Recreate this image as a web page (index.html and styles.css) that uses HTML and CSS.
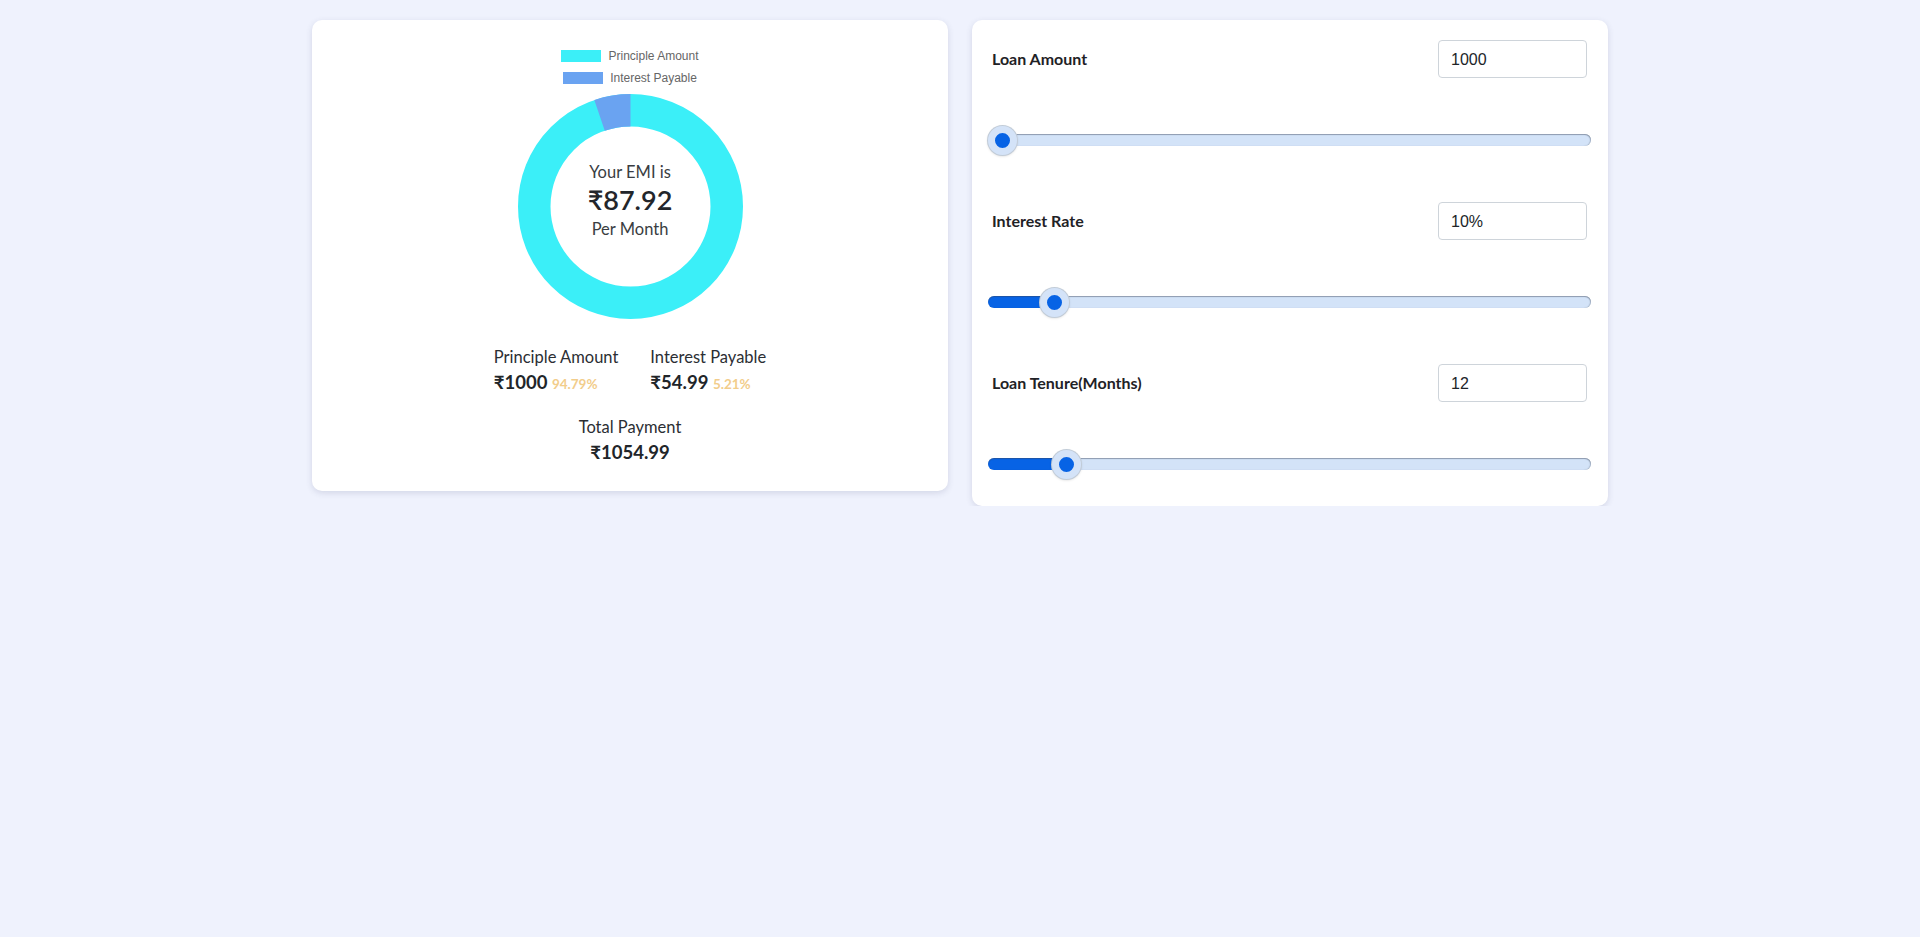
FILE: index.html
```html
<!DOCTYPE html>
<html lang="en">
<head>
<meta charset="utf-8">
<title>EMI Calculator</title>
<link rel="stylesheet" href="styles.css">
</head>
<body>
<main class="wrap">
  <section class="card summary">
    <div class="legend">
      <div class="legend-item"><span class="swatch swatch-principle"></span><span>Principle Amount</span></div>
      <div class="legend-item"><span class="swatch swatch-interest"></span><span>Interest Payable</span></div>
    </div>
    <div class="donut">
      <svg class="donut-svg" width="225" height="225" viewBox="0 0 225 225">
        <circle cx="112.5" cy="112.5" r="96.25" fill="none" stroke="#3beff8" stroke-width="32.5"/>
        <path d="M112.5,0 A112.5,112.5 0 0 0 76.33,5.97 L86.78,36.75 A80,80 0 0 1 112.5,32.5 Z" fill="#6aa3f1"/>
      </svg>
      <div class="donut-text">
        <div class="emi-label">Your EMI is</div>
        <div class="emi-value">₹87.92</div>
        <div class="emi-label emi-per">Per Month</div>
      </div>
    </div>
    <div class="stats">
      <div class="stat">
        <div class="stat-label">Principle Amount</div>
        <div class="stat-value">₹1000 <span class="pct">94.79%</span></div>
      </div>
      <div class="stat">
        <div class="stat-label">Interest Payable</div>
        <div class="stat-value">₹54.99 <span class="pct">5.21%</span></div>
      </div>
    </div>
    <div class="total">
      <div class="stat-label">Total Payment</div>
      <div class="stat-value">₹1054.99</div>
    </div>
  </section>

  <section class="card controls">
    <div class="group">
      <div class="row">
        <label class="field-label" for="amount">Loan Amount</label>
        <input class="field-input" id="amount" type="text" value="1000">
      </div>
      <input class="slider" type="range" min="1000" max="100000" value="1000" style="--fill: calc(15px + 0%)">
    </div>
    <div class="group">
      <div class="row">
        <label class="field-label" for="rate">Interest Rate</label>
        <input class="field-input" id="rate" type="text" value="10%">
      </div>
      <input class="slider" type="range" min="1" max="100" value="10" style="--fill: calc(15px + 9.09% - 2.73px)">
    </div>
    <div class="group">
      <div class="row">
        <label class="field-label" for="tenure">Loan Tenure(Months)</label>
        <input class="field-input" id="tenure" type="text" value="12">
      </div>
      <input class="slider" type="range" min="1" max="100" value="12" style="--fill: calc(15px + 11.11% - 3.33px)">
    </div>
  </section>
</main>
</body>
</html>
```

FILE: styles.css
```css
* {
  box-sizing: border-box;
}

body {
  margin: 0;
  background: #eff2fd;
  font-family: Lato, "Open Sans", "DejaVu Sans", sans-serif;
  color: #212529;
}

.wrap {
  width: 1296px;
  margin: 20px auto 0;
  display: grid;
  grid-template-columns: 1fr 1fr;
  gap: 24px;
  align-items: start;
}

.card {
  min-width: 0;
  background: #fff;
  border-radius: 10px;
  box-shadow: 0 2px 6px rgba(60, 70, 110, 0.16);
}

/* ---------- summary card ---------- */
.summary {
  padding: 20px 0 26px;
  display: flex;
  flex-direction: column;
  align-items: center;
}

.legend {
  padding: 10px 0;
  display: flex;
  flex-direction: column;
  align-items: center;
  gap: 10px;
  font-family: "Liberation Sans", Arial, sans-serif;
  font-size: 12px;
  color: #666;
}

.legend-item {
  height: 12px;
  display: flex;
  align-items: center;
  gap: 7px;
  line-height: 12px;
}

.swatch {
  width: 40px;
  height: 12px;
  display: block;
}

.swatch-principle {
  background: #3beff8;
}

.swatch-interest {
  background: #6aa3f1;
}

.donut {
  display: grid;
  width: 225px;
  height: 225px;
}

.donut-svg,
.donut-text {
  grid-area: 1 / 1;
}

.donut-svg {
  display: block;
}

.donut-text {
  justify-self: center;
  align-self: start;
  margin-top: 67px;
  text-align: center;
}

.emi-label {
  font-size: 16.5px;
  line-height: 22px;
  color: #3a3d42;
}

.emi-per {
  margin-top: 1px;
}

.emi-value {
  font-size: 27px;
  line-height: 34px;
  font-weight: 600;
  color: #23262b;
}

.stats {
  margin-top: 26px;
  display: flex;
  gap: 32px;
}

.stat-label {
  font-size: 16.5px;
  line-height: 24px;
  color: #2b2e33;
}

.stat-value {
  font-size: 18.5px;
  line-height: 26px;
  font-weight: 700;
  color: #212529;
}

.pct {
  font-size: 13.5px;
  font-weight: 700;
  color: #f2cd8b;
}

.total {
  margin-top: 18px;
  text-align: center;
}

/* ---------- controls card ---------- */
.controls {
  padding: 20px 17px 27px 16px;
}

.group + .group {
  margin-top: 47px;
}

.row {
  display: flex;
  justify-content: space-between;
  align-items: center;
  padding: 0 4px;
  height: 38px;
}

.field-label {
  font-size: 16px;
  font-weight: 700;
  color: #1f2226;
  margin-top: -2px;
}

.field-input {
  width: 149px;
  height: 38px;
  padding: 1px 12px 0;
  border: 1px solid #ced4da;
  border-radius: 4px;
  font-family: "Liberation Sans", Arial, sans-serif;
  font-size: 16px;
  color: #212529;
  background: #fff;
}

.slider {
  -webkit-appearance: none;
  appearance: none;
  display: block;
  width: 100%;
  height: 30px;
  margin: 47px 0 0;
  padding: 0;
  background: transparent;
}

.slider::-webkit-slider-runnable-track {
  height: 12px;
  border-radius: 6px;
  background: linear-gradient(to right, #0763e5 var(--fill), #d3e3f8 var(--fill));
  box-shadow: inset 0 1px 1px rgba(60, 70, 90, 0.45), inset -1px 0 1px rgba(60, 70, 90, 0.25);
}

.slider::-webkit-slider-thumb {
  -webkit-appearance: none;
  appearance: none;
  width: 29px;
  height: 29px;
  margin-top: -8.5px;
  border-radius: 50%;
  background: #0763e5;
  border: 7px solid #d4e3f8;
  box-shadow: 0 0 0 1px #c2ccd8, 0 1px 3px rgba(0, 0, 0, 0.18);
}
```
